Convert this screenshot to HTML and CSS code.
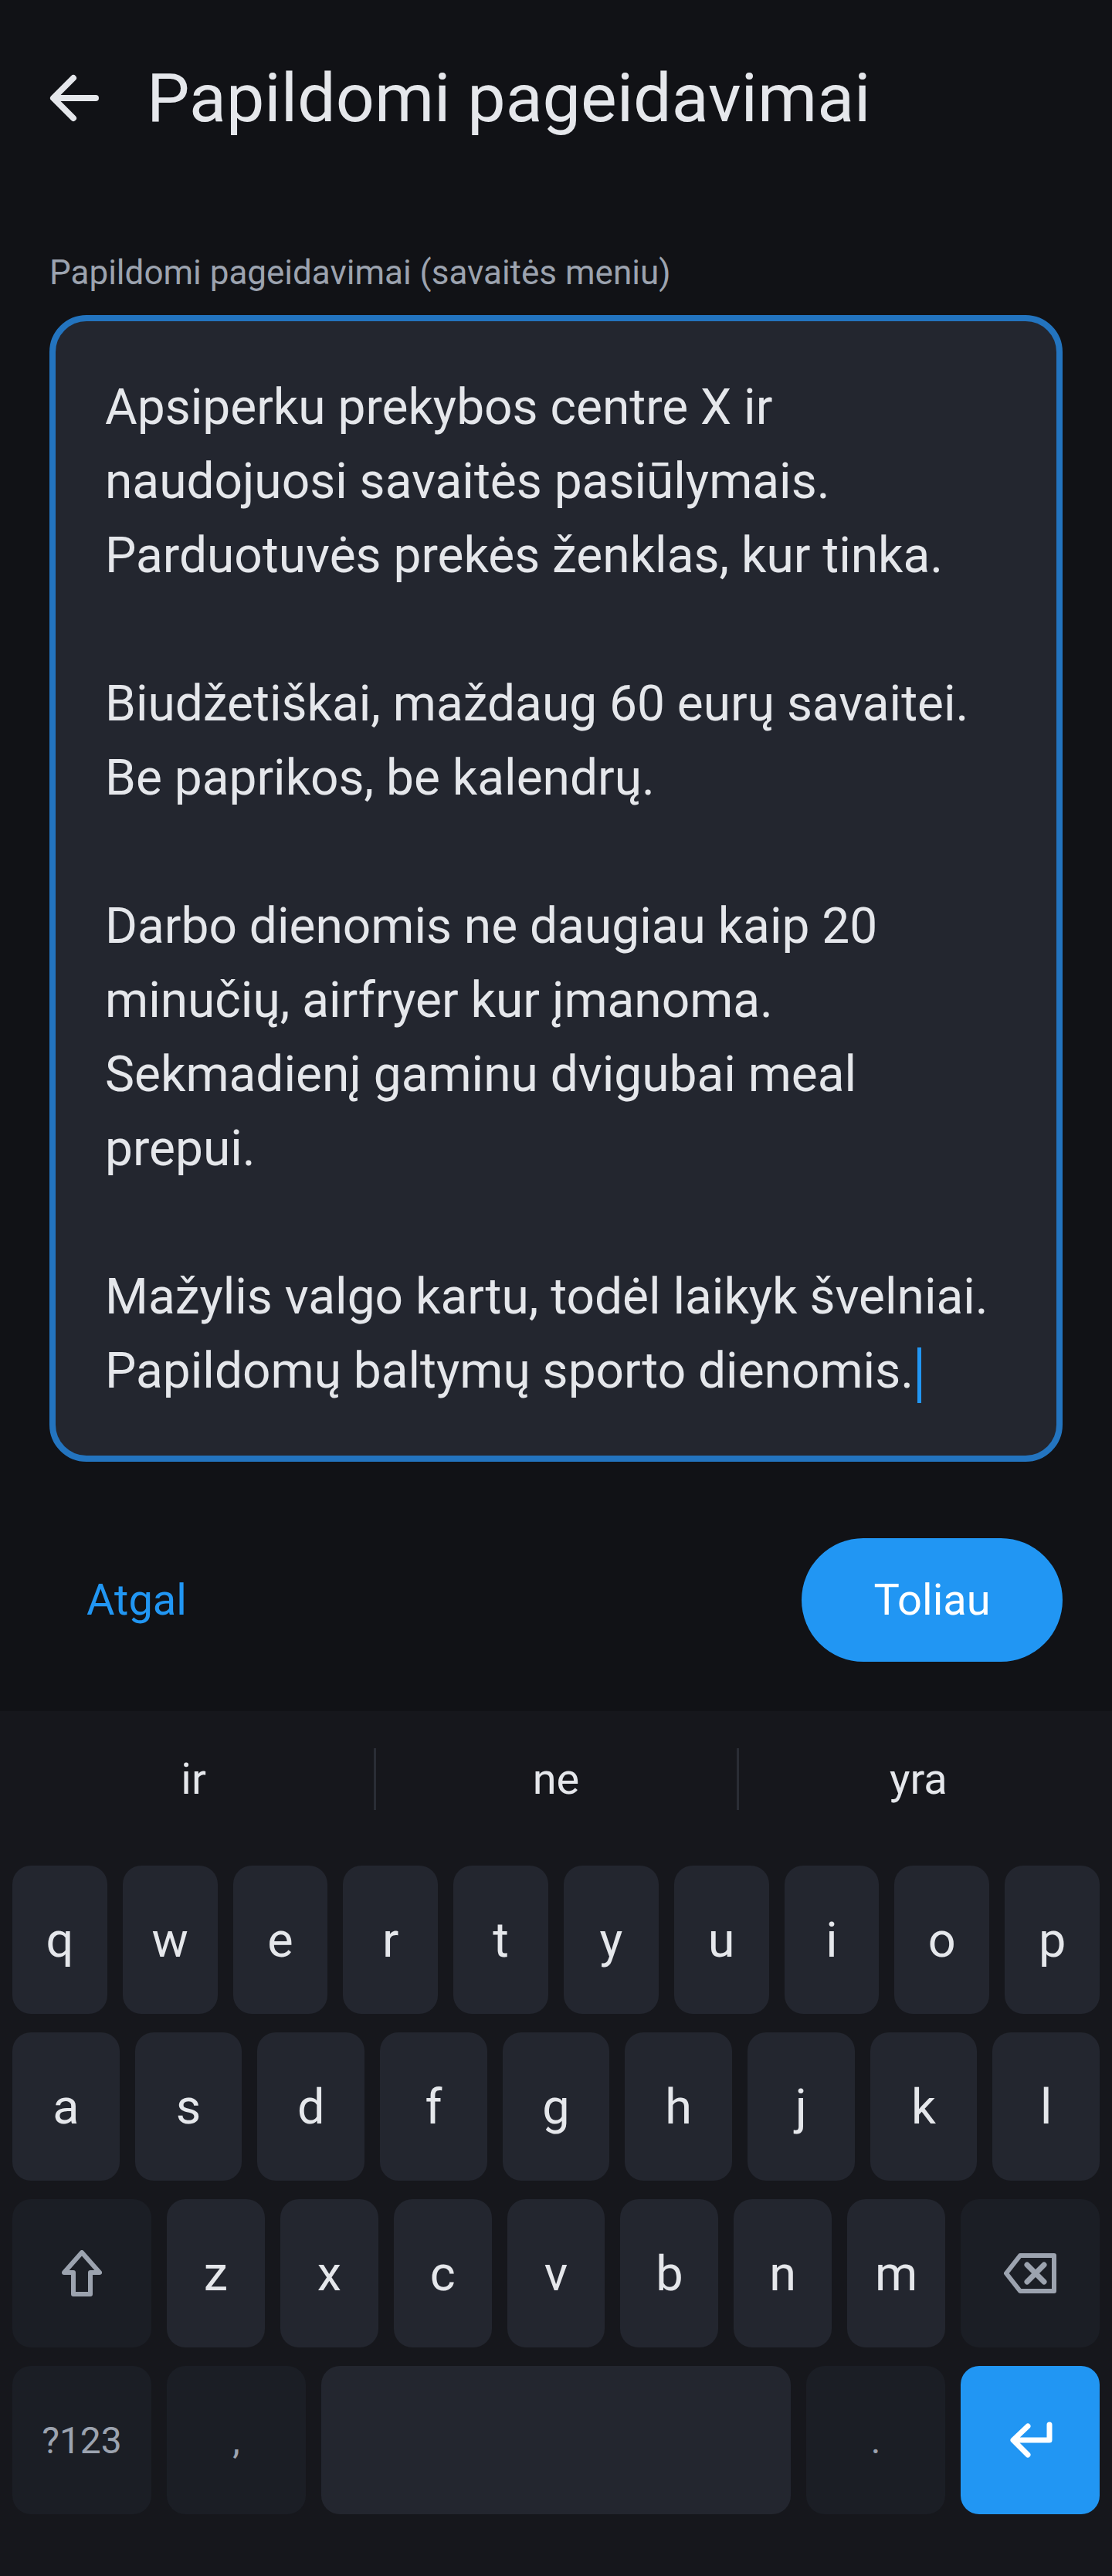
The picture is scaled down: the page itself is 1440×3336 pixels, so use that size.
FILE: index.html
```html
<!DOCTYPE html>
<html lang="lt">
<head>
<meta charset="utf-8">
<title>Papildomi pageidavimai</title>
<link rel="stylesheet" href="styles.css">
</head>
<body>
<div class="screen">
  <header class="topbar">
    <svg class="back" width="64" height="64" viewBox="0 0 64 64" aria-hidden="true">
      <path d="M60 32H6M31 6 5 32l26 26" fill="none" stroke="currentColor" stroke-width="8" stroke-linecap="round" stroke-linejoin="round"/>
    </svg>
    <h1 class="title">Papildomi pageidavimai</h1>
  </header>

  <main class="content">
    <label class="field-label">Papildomi pageidavimai (savaitės meniu)</label>
    <div class="textarea">
      <div class="line">Apsiperku prekybos centre X ir</div>
      <div class="line">naudojuosi savaitės pasiūlymais.</div>
      <div class="line">Parduotuvės prekės ženklas, kur tinka.</div>
      <div class="line"></div>
      <div class="line">Biudžetiškai, maždaug 60 eurų savaitei.</div>
      <div class="line">Be paprikos, be kalendrų.</div>
      <div class="line"></div>
      <div class="line">Darbo dienomis ne daugiau kaip 20</div>
      <div class="line">minučių, airfryer kur įmanoma.</div>
      <div class="line">Sekmadienį gaminu dvigubai meal</div>
      <div class="line">prepui.</div>
      <div class="line"></div>
      <div class="line">Mažylis valgo kartu, todėl laikyk švelniai.</div>
      <div class="line">Papildomų baltymų sporto dienomis.<span class="caret"></span></div>
    </div>

    <div class="actions">
      <button class="btn-text">Atgal</button>
      <button class="btn-primary">Toliau</button>
    </div>
  </main>

  <div class="keyboard">
    <div class="suggestions">
      <div class="sugg">ir</div>
      <div class="sugg">ne</div>
      <div class="sugg">yra</div>
    </div>
    <div class="rows">
      <div class="row row1">
        <div class="key">q</div><div class="key">w</div><div class="key">e</div><div class="key">r</div><div class="key">t</div>
        <div class="key">y</div><div class="key">u</div><div class="key">i</div><div class="key">o</div><div class="key">p</div>
      </div>
      <div class="row row2">
        <div class="key">a</div><div class="key">s</div><div class="key">d</div><div class="key">f</div><div class="key">g</div>
        <div class="key">h</div><div class="key">j</div><div class="key">k</div><div class="key">l</div>
      </div>
      <div class="row row3">
        <div class="key mod">
          <svg width="52" height="60" viewBox="0 0 52 60" aria-hidden="true">
            <path d="M26 3 49 29H37V57H15V29H3Z" fill="none" stroke="currentColor" stroke-width="6" stroke-linejoin="round"/>
          </svg>
        </div>
        <div class="key">z</div><div class="key">x</div><div class="key">c</div><div class="key">v</div>
        <div class="key">b</div><div class="key">n</div><div class="key">m</div>
        <div class="key mod">
          <svg width="68" height="52" viewBox="0 0 68 52" aria-hidden="true">
            <path d="M3 26 21 3H65V49H21Z" fill="none" stroke="currentColor" stroke-width="6" stroke-linejoin="round"/>
            <path d="M30 15 52 37M52 15 30 37" fill="none" stroke="currentColor" stroke-width="7" stroke-linecap="round"/>
          </svg>
        </div>
      </div>
      <div class="row row4">
        <div class="key mod small">?123</div>
        <div class="key mod small">,</div>
        <div class="key"></div>
        <div class="key mod small">.</div>
        <div class="key enter">
          <svg width="60" height="50" viewBox="0 0 60 50" aria-hidden="true">
            <path d="M55 5V25H9M27 7 8 25l19 19" fill="none" stroke="currentColor" stroke-width="7" stroke-linecap="round" stroke-linejoin="round"/>
          </svg>
        </div>
      </div>
    </div>
  </div>
</div>
</body>
</html>
```

FILE: styles.css
```css
* {
  box-sizing: border-box;
}

html, body {
  margin: 0;
  padding: 0;
  background: #111216;
}

body {
  font-family: Roboto, "Noto Sans", "Liberation Sans", sans-serif;
  color: #e5e7eb;
}

.screen {
  width: 1440px;
  min-height: 3336px;
  display: flex;
  flex-direction: column;
}

/* Top bar */
.topbar {
  height: 254px;
  display: flex;
  align-items: center;
  padding-left: 64px;
  gap: 62px;
}

.back {
  color: #e5e7eb;
  flex: none;
}

.title {
  margin: 0;
  font-size: 88px;
  line-height: 88px;
  font-weight: 400;
  color: #e5e7eb;
}

/* Content */
.content {
  padding: 0 64px;
}

.field-label {
  display: block;
  margin-top: 74px;
  font-size: 44px;
  line-height: 50px;
  color: #9ca3af;
}

.textarea {
  margin-top: 30px;
  border: 8px solid #2374bf;
  border-radius: 48px;
  background: #23262f;
  padding: 64px 64px 61px 64px;
  font-size: 64px;
  line-height: 96px;
  color: #e5e7eb;
}

.line {
  height: 96px;
  white-space: nowrap;
}

.caret {
  display: inline-block;
  width: 5px;
  height: 72px;
  margin-left: 5px;
  background: #2196f3;
  vertical-align: -20px;
}

.actions {
  margin-top: 99px;
  height: 160px;
  display: flex;
  justify-content: space-between;
  align-items: center;
}

.btn-text {
  background: none;
  border: 0;
  padding: 0 0 0 48px;
  font-family: inherit;
  font-size: 56px;
  color: #2196f3;
}

.btn-primary {
  width: 338px;
  height: 160px;
  border: 0;
  border-radius: 80px;
  background: #2196f3;
  color: #ffffff;
  font-family: inherit;
  font-size: 56px;
}

/* Keyboard */
.keyboard {
  margin-top: auto;
  height: 1120px;
  background: #16171c;
  padding: 0 16px 80px;
}

.suggestions {
  height: 176px;
  display: grid;
  grid-template-columns: repeat(3, 1fr);
  align-items: center;
}

.sugg {
  position: relative;
  text-align: center;
  font-size: 56px;
  line-height: 80px;
  color: #e5e7eb;
}

.sugg + .sugg::before {
  content: "";
  position: absolute;
  left: -1px;
  top: 0;
  width: 3px;
  height: 80px;
  background: #2a2d35;
}

.rows {
  margin-top: 24px;
  display: flex;
  flex-direction: column;
  gap: 24px;
}

.row {
  display: grid;
  gap: 20px;
  height: 192px;
}

.row1 { grid-template-columns: repeat(10, 1fr); }
.row2 { grid-template-columns: repeat(9, 1fr); }
.row3 { grid-template-columns: 180px repeat(7, 1fr) 180px; }
.row4 { grid-template-columns: 180px 180px 1fr 180px 180px; }

.key {
  background: #23262f;
  border-radius: 24px;
  display: flex;
  align-items: center;
  justify-content: center;
  font-size: 63px;
  color: #e5e7eb;
}

.key.mod {
  background: #1b1e25;
  color: #9ca3af;
}

.key.small {
  font-size: 48px;
}

.key.enter {
  background: #2196f3;
  color: #ffffff;
}
```
